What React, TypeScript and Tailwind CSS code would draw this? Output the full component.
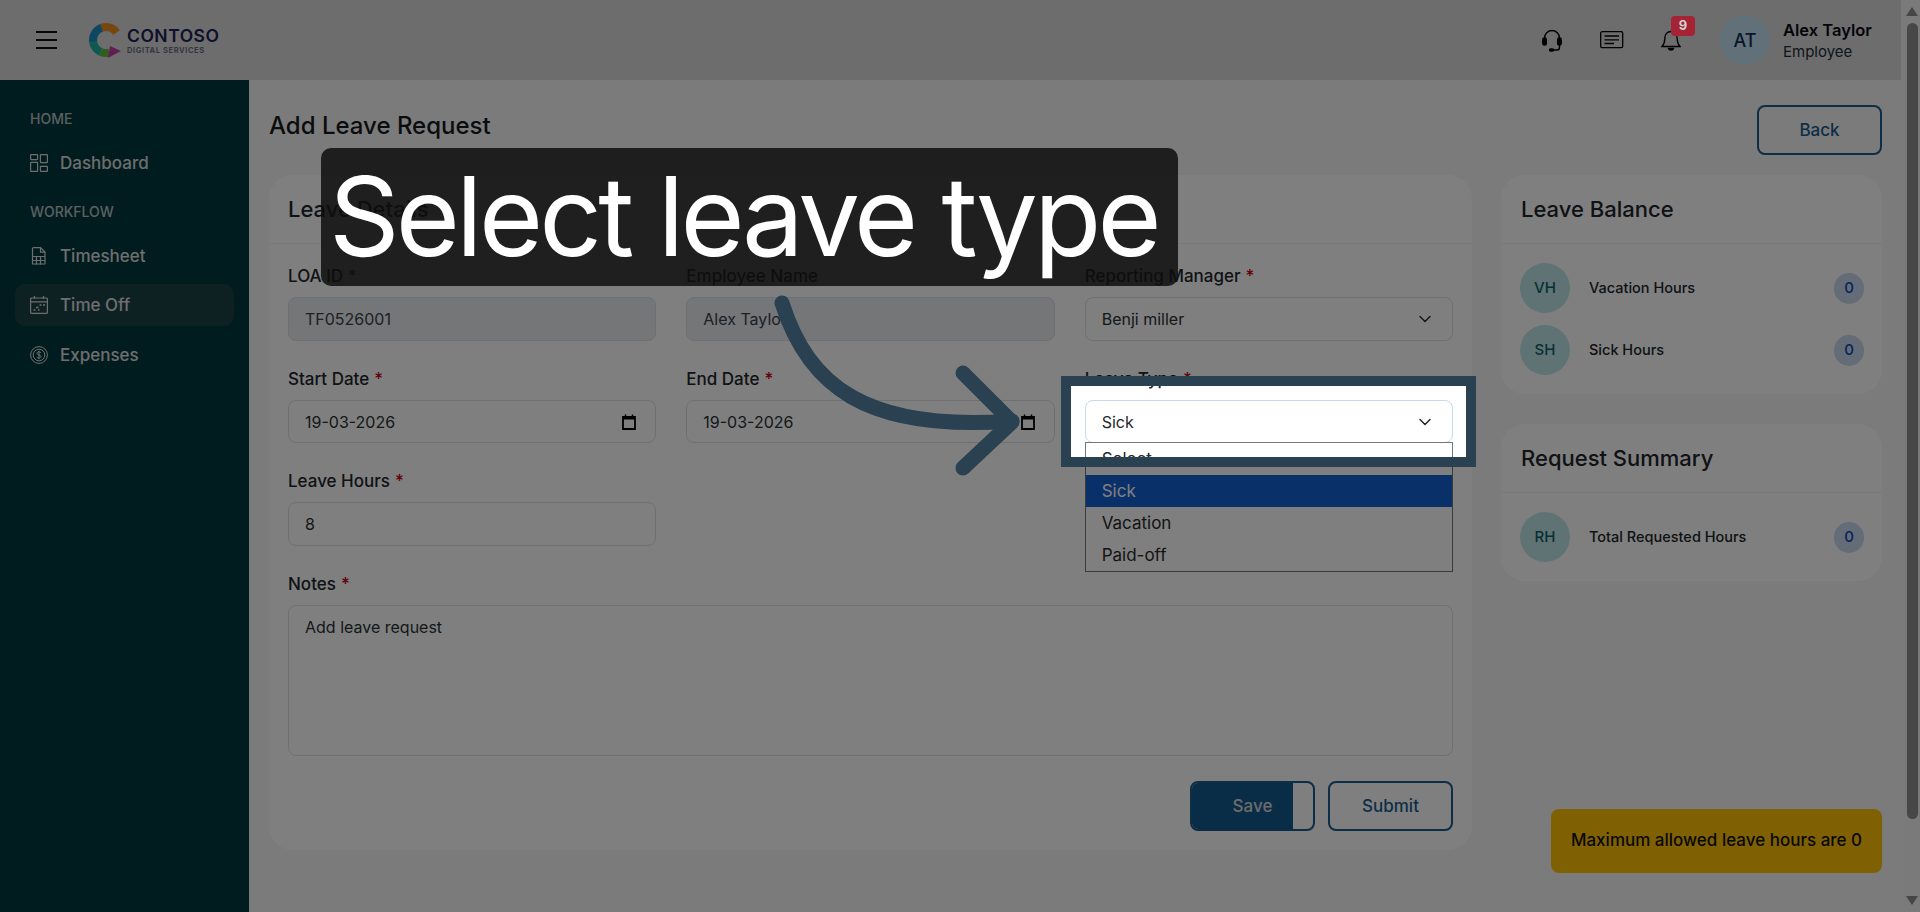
import { ChevronDown } from 'lucide-react';
import type { ReactNode } from 'react';

function DashboardIcon() {
  return (
    <svg width="18" height="18" viewBox="0 0 18 18" fill="none" stroke="currentColor" strokeWidth="1.2">
      <rect x="0.6" y="0.6" width="7" height="5" rx="0.5" />
      <rect x="10.4" y="0.6" width="7" height="8" rx="0.5" />
      <rect x="0.6" y="8.4" width="7" height="9" rx="0.5" />
      <rect x="10.4" y="12.4" width="7" height="5" rx="0.5" />
    </svg>
  );
}

function TimesheetIcon() {
  return (
    <svg width="18" height="18" viewBox="0 0 18 18" fill="none" stroke="currentColor" strokeWidth="1.2">
      <path d="M2.5 17.4V1.6c0-.6.4-1 1-1h7l4.500 4.500v11.300c0 .3-.3.6-.6.600H3.100c-.3 0-.6-.3-.6-.600z" />
      <path d="M10.500 .6v4.500H15" />
      <path d="M2.500 9.500h12.500M2.500 13.500h12.500M6.500 9.500v8M10.500 9.500v8" />
    </svg>
  );
}

function TimeOffIcon() {
  return (
    <svg width="18" height="18" viewBox="0 0 18 18" fill="none" stroke="currentColor" strokeWidth="1.2">
      <rect x="0.6" y="2" width="16.800" height="15.400" rx="1" />
      <path d="M0.600 5.800h16.800M4.500 0v3M13.500 0v3" />
      <path d="M9.500 9h2M13 9h2M6 11.500h2.500M3.500 14h2M8 14h1.500" strokeWidth="1.500" />
    </svg>
  );
}

function ExpensesIcon() {
  return (
    <svg width="18" height="18" viewBox="0 0 18 18" fill="none" stroke="currentColor" strokeWidth="1">
      <circle cx="9" cy="9" r="8.400" />
      <circle cx="9" cy="9" r="5.800" />
      <path d="M11 7c-.3-.8-1-1.200-2-1.200-1.200 0-2 .6-2 1.500C7 9.500 11 8.500 11 10.700c0 .9-.9 1.500-2 1.500s-1.800-.4-2.100-1.200M9 4.800v8.400" />
    </svg>
  );
}

function CalendarGlyph() {
  return (
    <svg width="14" height="16" viewBox="0 0 14 16" fill="none">
      <path d="M1 3h12v12H1z" stroke="#000" strokeWidth="1.800" />
      <path d="M1 2.500h12v3H1z" fill="#000" />
      <path d="M3.500 0.500v2M10.500 0.500v2" stroke="#000" strokeWidth="1.500" />
    </svg>
  );
}

function Logo() {
  return (
    <div className="flex items-center">
      <svg width="36" height="36" viewBox="0 0 36 36" fill="none" strokeWidth="8" className="mr-[3px]">
        <path d="M28.600 10.500A13 13 0 0 0 13.600 5.800" stroke="#ee8f1d" />
        <path d="M13.600 5.800A13 13 0 0 0 5.200 20.300" stroke="#1c8fc4" />
        <path d="M5.200 20.300A13 13 0 0 0 12.500 29.800" stroke="#1fb3a3" />
        <path d="M12.500 29.800A13 13 0 0 0 21.400 30.600" stroke="#63bb45" />
        <path d="M22 24L33 29L20 36Z" fill="#c23fa2" />
      </svg>
      <div className="flex flex-col">
        <span className="text-[17.500px] font-semibold leading-[20px] tracking-[0.5px] text-[#1b2256]">CONTOSO</span>
        <span className="mt-[1px] text-[7.500px] font-bold leading-[8px] tracking-[0.600px] text-[#6a6f7c]">DIGITAL SERVICES</span>
      </div>
    </div>
  );
}

function TopBar() {
  return (
    <header className="flex h-20 w-[1901px] shrink-0 items-center bg-[#dadada] pl-9 pr-[31px]">
      <div className="flex w-[21px] flex-col gap-[6px]">
        <span className="h-[2px] bg-[#111]" />
        <span className="h-[2px] bg-[#111]" />
        <span className="h-[2px] bg-[#111]" />
      </div>
      <div className="ml-[31px]">
        <Logo />
      </div>
      <div className="ml-auto flex items-center">
        <svg width="20" height="23" viewBox="0 0 20 23" fill="none" stroke="#000" strokeWidth="1.400">
          <path d="M2.500 12V9a7.500 7.500 0 0 1 15 0v3" />
          <rect x="0.800" y="9" width="3.500" height="7" rx="1.500" fill="#000" />
          <rect x="15.700" y="9" width="3.500" height="7" rx="1.500" fill="#000" />
          <path d="M17.500 16v2.500c0 1.500-1 2.500-2.500 2.500h-4" />
          <rect x="7.500" y="20" width="4" height="2" rx="1" fill="#000" />
        </svg>
        <svg width="24" height="18" viewBox="0 0 24 18" fill="none" stroke="#000" strokeWidth="1.300" className="ml-[38px]">
          <rect x="0.700" y="0.700" width="22" height="16" rx="1.500" />
          <path d="M4.500 5h14.500M4.500 8.800h14.500M4.500 12.500h9.500" />
        </svg>
        <div className="relative ml-[37px] mr-[39px] h-[24px] w-[20px]">
          <svg width="20" height="24" viewBox="0 0 20 24" fill="none" stroke="#000" strokeWidth="1.400">
            <path d="M1 18.500c2-2 2.800-3.500 2.800-8 0-4 2.500-7 6.200-7s6.200 3 6.200 7c0 4.500.8 6 2.800 8z" />
            <path d="M7.500 20.500c.5 2 4.500 2 5 0z" fill="#000" />
          </svg>
          <span className="absolute left-[10px] top-[-12px] z-50 flex h-5 w-6 items-center justify-center rounded-[4px] bg-[#a42335] text-[13px] font-bold text-[#d0d0d0]">
            9
          </span>
        </div>
        <div className="flex h-[50px] w-[50px] items-center justify-center rounded-full bg-[#c4e0f4] text-[18px] font-medium text-[#0f2f4d]">
          AT
        </div>
        <div className="ml-[13px] w-[87px] whitespace-nowrap">
          <p className="text-[16.500px] font-semibold leading-[22px] text-[#0b0b12]">Alex Taylor</p>
          <p className="text-[15px] leading-[21px] text-[#222a33]">Employee</p>
        </div>
      </div>
    </header>
  );
}

function NavItem({ icon, label, active }: { icon: ReactNode; label: string; active?: boolean }) {
  return (
    <div
      className={`mx-[15px] flex h-[42px] items-center gap-3 rounded-[10px] px-[15px] text-[17px] font-medium text-[#dddddd] ${
        active ? 'bg-[#1a4347]' : ''
      }`}
    >
      {icon}
      <span className="pt-[2px]">{label}</span>
    </div>
  );
}

function Sidebar() {
  return (
    <aside className="flex w-[249px] shrink-0 flex-col bg-[#02383e] pt-[28px]">
      <p className="ml-[30px] text-[14px] font-medium leading-[22px] text-[#b6c1c3]">HOME</p>
      <div className="mt-[12px]">
        <NavItem icon={<DashboardIcon />} label="Dashboard" />
      </div>
      <p className="ml-[30px] mt-[17px] text-[14px] font-medium leading-[22px] text-[#b6c1c3]">WORKFLOW</p>
      <div className="mt-[12px] flex flex-col gap-[7px]">
        <NavItem icon={<TimesheetIcon />} label="Timesheet" />
        <NavItem active icon={<TimeOffIcon />} label="Time Off" />
        <div className="mt-[1px]">
          <NavItem icon={<ExpensesIcon />} label="Expenses" />
        </div>
      </div>
    </aside>
  );
}

function Label({ text, required }: { text: string; required?: boolean }) {
  return (
    <p className="mb-[9px] h-6 text-[17px] font-medium leading-6 text-[#20252a]">
      {text}
      {required ? <span className="ml-[5px] text-[#c8000e]">*</span> : null}
    </p>
  );
}

function Input({
  value,
  disabled,
  short,
  trailing,
}: {
  value: string;
  disabled?: boolean;
  short?: boolean;
  trailing?: ReactNode;
}) {
  return (
    <div
      className={`flex items-center justify-between rounded-lg border border-[#dcdfe4] pl-4 pr-[19px] text-[16px] ${
        disabled ? 'bg-[#e9ecf1] text-[#3a4148]' : 'bg-white text-[#2a3036]'
      } ${short ? 'h-[43px]' : 'h-11'}`}
    >
      <span>{value}</span>
      {trailing}
    </div>
  );
}

function LeaveTypeSelect() {
  return (
    <div className="relative">
      <div className="flex h-[43px] items-center justify-between rounded-lg border border-[#c5d9f0] bg-white pl-4 pr-[17px] text-[16px] text-[#22282e]">
        <span>Sick</span>
        <ChevronDown size={20} strokeWidth={1.800} className="text-[#22282e]" />
      </div>
      <ul className="absolute left-0 right-0 top-[42px] z-10 border border-[#767676] bg-white text-[17px] text-[#2a2a2a]">
        <li className="flex h-8 items-center pl-4 pt-[2px]">Select</li>
        <li className="flex h-8 items-center bg-[#1460d4] pl-4 pt-[2px] text-white">Sick</li>
        <li className="flex h-8 items-center pl-4 pt-[2px]">Vacation</li>
        <li className="flex h-8 items-center pl-4 pt-[2px]">Paid-off</li>
      </ul>
    </div>
  );
}

function LeaveForm() {
  return (
    <section className="h-[675px] w-[1203px] shrink-0 rounded-[24px] bg-white">
      <div className="flex h-[69px] items-center border-b border-[#f0f0f0] px-[19px] text-[22px] font-medium text-[#20252a]">
        Leave Details
      </div>
      <div className="px-[19px] pt-5">
        <div className="grid grid-cols-3 gap-x-[30px]">
          <div>
            <Label text="LOA ID" required />
            <Input value="TF0526001" disabled />
          </div>
          <div>
            <Label text="Employee Name" />
            <Input value="Alex Taylor" disabled />
          </div>
          <div>
            <Label text="Reporting Manager" required />
            <Input value="Benji miller" trailing={<ChevronDown size={20} strokeWidth={1.800} className="-mr-[2px]" />} />
          </div>
          <div className="mt-[26px]">
            <Label text="Start Date" required />
            <Input value="19-03-2026" short trailing={<CalendarGlyph />} />
          </div>
          <div className="mt-[26px]">
            <Label text="End Date" required />
            <Input value="19-03-2026" short trailing={<CalendarGlyph />} />
          </div>
          <div className="mt-[26px]">
            <Label text="Leave Type" required />
            <LeaveTypeSelect />
          </div>
          <div className="mt-[26px]">
            <Label text="Leave Hours" required />
            <Input value="8" />
          </div>
        </div>
        <div className="mt-[26px]">
          <Label text="Notes" required />
          <div className="h-[151px] rounded-lg border border-[#dcdfe4] px-4 py-[9px] text-[16px] text-[#2a3036]">
            Add leave request
          </div>
        </div>
        <div className="mt-[25px] flex justify-end gap-[13px]">
          <div className="relative h-[50px] w-[125px] overflow-hidden rounded-lg border-2 border-[#1b5c8e] bg-white text-[17px] font-medium">
            <div className="absolute inset-y-0 left-0 w-[101px] bg-[#145a8e]" />
            <span className="relative flex h-full items-center justify-center pt-[2px] text-[#d8d8d8]">Save</span>
          </div>
          <div className="flex h-[50px] w-[125px] items-center justify-center rounded-lg border-2 border-[#1b5c8e] pt-[2px] text-[17px] font-medium text-[#1b5c8e]">
            Submit
          </div>
        </div>
      </div>
    </section>
  );
}

function SummaryCard({
  title,
  rows,
}: {
  title: string;
  rows: { code: string; label: string }[];
}) {
  return (
    <section className="rounded-[24px] bg-white">
      <div className="flex h-[69px] items-center border-b border-[#f0f0f0] px-5 text-[22px] font-medium text-[#20252a]">
        {title}
      </div>
      <div className="flex flex-col gap-3 px-[19px] py-[19px]">
        {rows.map((row) => (
          <div key={row.code} className="flex items-center">
            <span className="flex h-[50px] w-[50px] items-center justify-center rounded-full bg-[#bfe6ea] text-[15px] font-medium text-[#0f5f6b]">
              {row.code}
            </span>
            <span className="ml-[19px] text-[14.500px] font-medium text-[#20252a]">{row.label}</span>
            <span className="ml-auto mr-[-1px] flex h-[31px] w-[30px] items-center justify-center rounded-full bg-[#c9d8ee] text-[15px] font-medium text-[#0d47b0]">
              0
            </span>
          </div>
        ))}
      </div>
    </section>
  );
}

function FakeScrollbar() {
  return (
    <div className="flex w-[17px] shrink-0 flex-col items-center bg-[#f4f4f4]">
      <div className="mt-[7px] h-0 w-0 border-x-[6px] border-b-[9px] border-x-transparent border-b-[#8c8c8c]" />
      <div className="ml-[1px] mt-[7px] h-[796px] w-[11px] rounded-full bg-[#8e8e8e]" />
      <div className="mt-auto mb-[7px] h-0 w-0 border-x-[6px] border-t-[9px] border-x-transparent border-t-[#8c8c8c]" />
    </div>
  );
}

export default function App() {
  return (
    <div className="relative flex h-[912px] w-[1920px] overflow-hidden bg-[#f6f6f6] font-['Inter','Noto_Sans',sans-serif]">
      <div className="flex w-[1903px] flex-col">
        <TopBar />
        <div className="flex min-h-0 flex-1">
          <Sidebar />
          <main className="min-w-0 flex-1 pl-5 pt-[25px]">
            <div className="flex h-[50px] items-start justify-between pr-[21px]">
              <h1 className="pt-px text-[24px] font-medium leading-10 text-[#14181d]">Add Leave Request</h1>
              <button className="h-[50px] w-[125px] rounded-lg border-2 border-[#1b5c8e] pt-[2px] text-[17px] font-medium text-[#1b5c8e]">
                Back
              </button>
            </div>
            <div className="mt-5 flex gap-[29px] pr-[21px]">
              <LeaveForm />
              <div className="flex min-w-0 flex-1 flex-col gap-[30px]">
                <SummaryCard
                  title="Leave Balance"
                  rows={[
                    { code: 'VH', label: 'Vacation Hours' },
                    { code: 'SH', label: 'Sick Hours' },
                  ]}
                />
                <SummaryCard title="Request Summary" rows={[{ code: 'RH', label: 'Total Requested Hours' }]} />
              </div>
            </div>
          </main>
        </div>
      </div>
      <FakeScrollbar />

      <div className="absolute left-[1551px] top-[809px] flex h-16 w-[331px] items-center justify-center rounded-lg bg-[#ffc107] text-[17px] font-medium text-[#111]">
        Maximum allowed leave hours are 0
      </div>

      {/* tutorial overlay: spotlight frame, arrow and caption */}
      <div className="absolute left-[1061px] top-[376px] z-20 h-[91px] w-[415px] border-[10px] border-[#2a4151] shadow-[0_0_0_3000px_rgba(0,0,0,0.5)]" />
      <svg className="absolute left-0 top-0 z-30" width="1920" height="912" fill="none" stroke="#2a4151" strokeWidth="15" strokeLinecap="round" strokeLinejoin="round">
        <path d="M782 303 C808 385 865 432 1012 421" />
        <path d="M963 373 L1012 422 L963 468" />
      </svg>
      <div className="absolute left-[321px] top-[148px] z-30 flex h-[138px] w-[857px] items-center rounded-[10px] bg-[rgba(14,14,14,0.85)] pb-[3px] pl-[8px] text-[110px] leading-none tracking-[-3.800px] text-white">
        Select leave type
      </div>
    </div>
  );
}
